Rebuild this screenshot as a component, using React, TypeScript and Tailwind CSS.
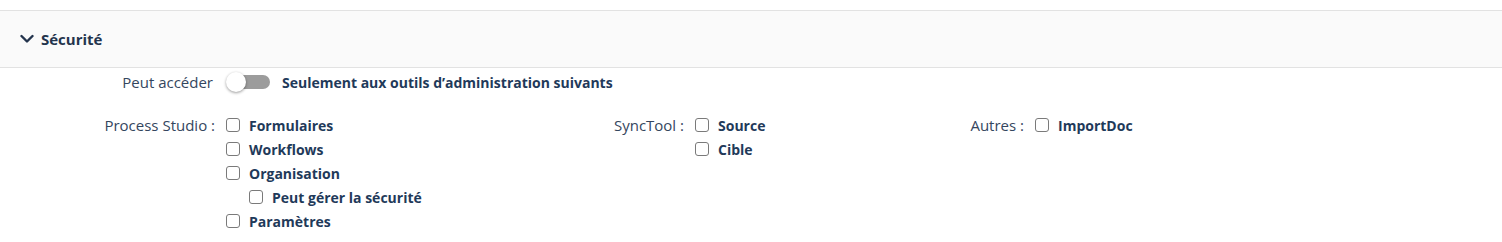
import React from 'react';

const font = { fontFamily: '"Open Sans", "Noto Sans", sans-serif' };

function Box({ label }: { label: string }) {
  return (
    <label className="flex h-6 items-center gap-[9px]">
      <span className="block h-[14px] w-[14px] rounded-[3px] border-[1.5px] border-[#7a7a7a] bg-white" />
      <span className="text-[14px] font-bold text-[#1f3a5a]">{label}</span>
    </label>
  );
}

function Group({ title, width, labelWidth, children }: { title: string; width: string; labelWidth: string; children: React.ReactNode }) {
  return (
    <div className={`flex ${width}`}>
      <div className={`${labelWidth} h-6 shrink-0 pr-[11px] text-right text-[15px] leading-6 text-[#34465e]`}>{title}</div>
      <div className="flex flex-col">{children}</div>
    </div>
  );
}

export default function App() {
  return (
    <div className="min-h-[242px] bg-white pt-[10px]" style={font}>
      <div className="flex h-[58px] items-center border-y border-[#e2e2e2] bg-[#fafafa] pl-[20px]">
        <svg width="14" height="14" viewBox="0 0 14 14" className="mr-[7px]">
          <path d="M1.5 4 L7 9.5 L12.5 4" fill="none" stroke="#23344d" strokeWidth="2.4" strokeLinecap="round" strokeLinejoin="round" />
        </svg>
        <span className="text-[15px] font-bold text-[#23344d]">Sécurité</span>
      </div>

      <div className="mt-[3px] flex h-[22px] items-center">
        <div className="w-[226px] pr-[13px] text-right text-[15px] text-[#34465e]">Peut accéder</div>
        <div className="relative mr-[12px] h-[20px] w-[44px]">
          <div className="absolute left-[2px] top-[3px] h-[14px] w-[42px] rounded-full bg-[#9c9c9c]" />
          <div className="absolute left-0 top-0 h-[20px] w-[20px] rounded-full bg-white shadow-[0_1px_3px_rgba(0,0,0,0.4)]" />
        </div>
        <span className="text-[14px] font-bold text-[#1f3a5a]">Seulement aux outils d’administration suivants</span>
      </div>

      <div className="mt-[20px] flex">
        <Group title="Process Studio :" width="w-[590px]" labelWidth="w-[226px]">
          <Box label="Formulaires" />
          <Box label="Workflows" />
          <Box label="Organisation" />
          <div className="pl-[23px]">
            <Box label="Peut gérer la sécurité" />
          </div>
          <Box label="Paramètres" />
        </Group>
        <Group title="SyncTool :" width="w-[360px]" labelWidth="w-[105px]">
          <Box label="Source" />
          <Box label="Cible" />
        </Group>
        <Group title="Autres :" width="w-[300px]" labelWidth="w-[85px]">
          <Box label="ImportDoc" />
        </Group>
      </div>
    </div>
  );
}
